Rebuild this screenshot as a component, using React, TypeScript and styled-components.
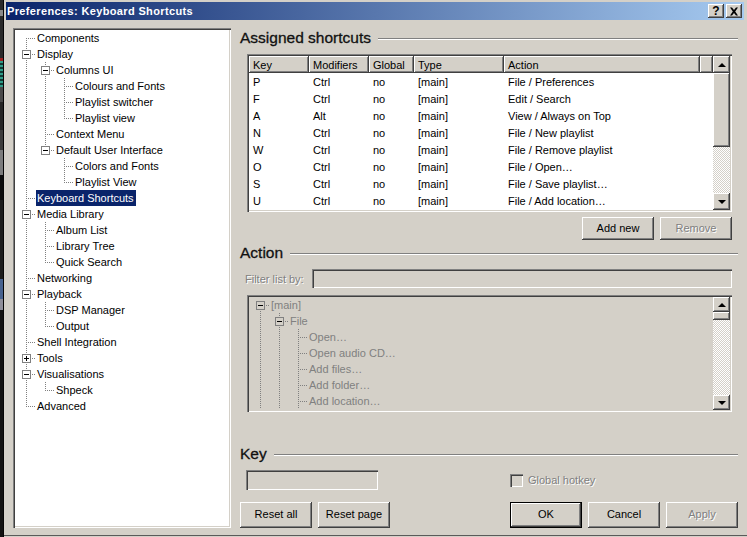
import React from "react";
import styled, { createGlobalStyle } from "styled-components";

const FACE = "#d4d0c8";
const UI_FONT = `"Liberation Sans", Arial, sans-serif`;

const Global = createGlobalStyle`
  html, body { margin: 0; padding: 0; overflow: hidden; background: #101010; }
  * { box-sizing: border-box; }
`;

const Desktop = styled.div`
  width: 747px;
  height: 537px;
  display: flex;
  background:
    repeating-linear-gradient(to bottom, #2f9c88 0 2px, #123a34 2px 4px) 0 61px / 3px 26px no-repeat,
    linear-gradient(to bottom,
      #2a2a2a 0 10px, #8a8a8a 10px 16px, #2a2a2a 16px 58px, #a02020 58px 61px, #2a2a2a 61px 87px,
      #4a4a4a 87px 102px, #262626 102px 130px, #3c3c3c 130px 150px, #7c7c7c 150px 175px,
      #0c0c0c 175px 200px, #1c1c1c 200px 279px, #47628f 279px 299px, #8e8e9a 299px 310px,
      #121212 310px 537px) 0 0 / 3px 537px no-repeat,
    #050505;
  font-family: ${UI_FONT};
  font-size: 11px;
  color: #000;
`;

const Win = styled.div`
  margin-left: 4px;
  flex: 1;
  display: flex;
  flex-direction: column;
  background: ${FACE};
  padding: 2px 3px 2px 2px;
  box-shadow: inset 0 -1px 0 ${FACE}, inset 0 -2px 0 #5a5a5a;
  min-width: 0;
`;

const TitleBar = styled.div`
  height: 18px;
  display: flex;
  align-items: center;
  padding: 0 2px 0 1px;
  background: linear-gradient(to right, #0a246a, #a6caf0);
  color: #fff;
  font-weight: 700;
  font-size: 11px;
  letter-spacing: 0.36px;
`;

const TitleText = styled.span`
  flex: 1;
`;

const raised = `
  background: ${FACE};
  box-shadow: inset -1px -1px 0 #404040, inset 1px 1px 0 #fff, inset -2px -2px 0 #808080;
`;

const sunken = `
  box-shadow: inset 1px 1px 0 #808080, inset 2px 2px 0 #404040, inset -1px -1px 0 #fff, inset -2px -2px 0 ${FACE};
`;

const CaptionButton = styled.div`
  ${raised}
  width: 16px;
  height: 14px;
  margin-left: 2px;
  display: flex;
  align-items: center;
  justify-content: center;
  color: #000;
  font-size: 12px;
  font-weight: 700;
  letter-spacing: 0;
`;

const Body = styled.div`
  flex: 1;
  display: flex;
  padding: 8px 6px 7px 7px;
  min-height: 0;
`;

const TreePanel = styled.div`
  ${sunken}
  width: 218px;
  background: #fff;
  padding: 2px 2px 2px 4px;
`;

const Right = styled.div`
  margin-left: 9px;
  width: 498px;
  display: flex;
  flex-direction: column;
`;

const Heading = styled.div<{ $top: number }>`
  margin-top: ${(p) => p.$top}px;
  height: 20px;
  padding-bottom: 1px;
  display: flex;
  align-items: center;
  gap: 7px;
  font-size: 15.5px;
  line-height: 18px;
  font-weight: 400;
  color: #111;
  -webkit-text-stroke: 0.3px #111;
`;

const Rule = styled.div`
  flex: 1;
  height: 2px;
  margin-top: 3px;
  background: linear-gradient(to bottom, #808080 0 1px, #fff 1px 2px);
`;

const ListBox = styled.div`
  ${sunken}
  margin: 6px 6px 0 7px;
  height: 158px;
  padding: 2px;
  display: flex;
  background: #fff;
`;

const ListMain = styled.div`
  flex: 1;
  min-width: 0;
  display: flex;
  flex-direction: column;
`;

const HeaderRow = styled.div`
  height: 17px;
  display: flex;
`;

const HeaderCell = styled.div<{ $w: number }>`
  ${raised}
  width: ${(p) => p.$w}px;
  flex: ${(p) => (p.$w ? "none" : 1)};
  padding: 0 4px;
  display: flex;
  align-items: center;
`;

const DataRow = styled.div`
  height: 17px;
  display: flex;
  align-items: center;
`;

const DataCell = styled.div<{ $w: number }>`
  width: ${(p) => p.$w}px;
  padding: 0 4px;
  white-space: nowrap;
`;

const Scroll = styled.div`
  width: 17px;
  display: flex;
  flex-direction: column;
  flex: none;
`;

const ScrollBtn = styled.div<{ $h: number }>`
  ${raised}
  height: ${(p) => p.$h}px;
  flex: none;
  display: flex;
  align-items: center;
  justify-content: center;
`;

const Arrow = styled.span<{ $up?: boolean }>`
  width: 0;
  height: 0;
  border-left: 4px solid transparent;
  border-right: 4px solid transparent;
  ${(p) => (p.$up ? "border-bottom: 4px solid #000;" : "border-top: 4px solid #000;")}
`;

const Thumb = styled.div<{ $h: number }>`
  ${raised}
  height: ${(p) => p.$h}px;
  flex: none;
`;

const Track = styled.div`
  flex: 1;
  background: repeating-conic-gradient(#fff 0 25%, ${FACE} 0 50%) 0 0 / 2px 2px;
`;

const ButtonRow = styled.div`
  margin: 5px 6px 0 0;
  display: flex;
  justify-content: flex-end;
  gap: 6px;
`;

const Btn = styled.div<{ $h?: number; $off?: boolean; $def?: boolean }>`
  ${raised}
  width: 72px;
  height: ${(p) => p.$h ?? 26}px;
  padding-bottom: 2px;
  display: flex;
  align-items: center;
  justify-content: center;
  font-size: 11px;
  ${(p) => (p.$off ? "color: #808080; text-shadow: 1px 1px 0 #fff;" : "")}
  ${(p) =>
    p.$def
      ? `box-shadow: inset 0 0 0 1px #000, inset -2px -2px 0 #404040, inset 2px 2px 0 #fff, inset -3px -3px 0 #808080;`
      : ""}
`;

const FilterRow = styled.div`
  margin: 6px 6px 0 5px;
  height: 19px;
  display: flex;
  align-items: center;
`;

const OffLabel = styled.span`
  color: #808080;
  text-shadow: 1px 1px 0 #fff;
`;

const FilterInput = styled.div`
  ${sunken}
  margin-left: auto;
  width: 420px;
  height: 100%;
`;

const ActionBox = styled.div`
  ${sunken}
  margin: 7px 6px 0 7px;
  height: 117px;
  padding: 2px;
  display: flex;
`;

const ActionTree = styled.div`
  flex: 1;
  min-width: 0;
  overflow: hidden;
  padding-left: 2px;
  color: #808080;
`;

const KeyRow = styled.div`
  margin-top: 6px;
  height: 20px;
  display: flex;
  align-items: center;
  justify-content: space-between;
`;

const KeyInput = styled.div`
  ${sunken}
  margin-left: 6px;
  width: 132px;
  height: 100%;
`;

const CheckLabel = styled.div`
  width: 228px;
  display: flex;
  align-items: center;
  gap: 5px;
`;

const CheckBox = styled.div`
  ${sunken}
  width: 13px;
  height: 13px;
`;

const Footer = styled.div`
  margin-top: 12px;
  display: flex;
  justify-content: space-between;
`;

const Group = styled.div`
  display: flex;
  gap: 6px;
`;

/* Tree */
const TreeRow = styled.div`
  height: 16px;
  display: flex;
  align-items: center;
  flex: none;
`;

const Guide = styled.div<{ $v?: "full" | "tee" | "end" | "start" | "none"; $h?: boolean }>`
  position: relative;
  width: 19px;
  height: 16px;
  flex: none;
  &::before {
    content: "";
    display: ${(p) => (!p.$v || p.$v === "none" ? "none" : "block")};
    position: absolute;
    left: 9px;
    width: 1px;
    top: ${(p) => (p.$v === "start" ? "8px" : "0")};
    height: ${(p) => (p.$v === "end" ? "9px" : p.$v === "start" ? "8px" : "16px")};
    background: repeating-linear-gradient(to bottom, #808080 0 1px, transparent 1px 2px);
  }
  &::after {
    content: "";
    display: ${(p) => (p.$h ? "block" : "none")};
    position: absolute;
    left: 10px;
    top: 8px;
    width: 9px;
    height: 1px;
    background: repeating-linear-gradient(to right, transparent 0 1px, #808080 1px 2px);
  }
`;

const Expander = styled.span`
  position: absolute;
  z-index: 1;
  left: 5px;
  top: 4px;
  width: 9px;
  height: 9px;
  background: #fff;
  border: 1px solid #808080;
  color: #000;
`;

const ExpanderOff = styled(Expander)`
  background: ${FACE};
`;

const Minus = styled.span`
  position: absolute;
  left: 1px;
  top: 3px;
  width: 5px;
  height: 1px;
  background: currentColor;
`;

const PlusBar = styled.span`
  position: absolute;
  left: 3px;
  top: 1px;
  width: 1px;
  height: 5px;
  background: currentColor;
`;

const Label = styled.span<{ $sel?: boolean }>`
  margin-left: ${(p) => (p.$sel ? "0" : "1px")};
  padding: ${(p) => (p.$sel ? "0 2px 0 1px" : "0")};
  height: 16px;
  line-height: 16px;
  white-space: nowrap;
  ${(p) => (p.$sel ? "background: #0a246a; color: #fff;" : "")}
`;

type NodeRow = {
  label: string;
  guides: ("full" | "none")[];
  v: "tee" | "end" | "start" | "full";
  exp?: "-" | "+";
  sel?: boolean;
};

const R = (label: string, guides: string, v: NodeRow["v"], exp?: "-" | "+", sel?: boolean): NodeRow => ({
  label,
  guides: guides.split("").map((c) => (c === "1" ? "full" : "none")),
  v,
  exp,
  sel,
});

const treeRows: NodeRow[] = [
  R("Components", "", "start"),
  R("Display", "", "tee", "-"),
  R("Columns UI", "1", "tee", "-"),
  R("Colours and Fonts", "11", "tee"),
  R("Playlist switcher", "11", "tee"),
  R("Playlist view", "11", "end"),
  R("Context Menu", "1", "tee"),
  R("Default User Interface", "1", "end", "-"),
  R("Colors and Fonts", "10", "tee"),
  R("Playlist View", "10", "end"),
  R("Keyboard Shortcuts", "", "tee", undefined, true),
  R("Media Library", "", "tee", "-"),
  R("Album List", "1", "tee"),
  R("Library Tree", "1", "tee"),
  R("Quick Search", "1", "end"),
  R("Networking", "", "tee"),
  R("Playback", "", "tee", "-"),
  R("DSP Manager", "1", "tee"),
  R("Output", "1", "end"),
  R("Shell Integration", "", "tee"),
  R("Tools", "", "tee", "+"),
  R("Visualisations", "", "tee", "-"),
  R("Shpeck", "1", "end"),
  R("Advanced", "", "end"),
];

const actionRows: NodeRow[] = [
  R("[main]", "", "start", "-"),
  R("File", "1", "tee", "-"),
  R("Open…", "11", "tee"),
  R("Open audio CD…", "11", "tee"),
  R("Add files…", "11", "tee"),
  R("Add folder…", "11", "tee"),
  R("Add location…", "11", "tee"),
];

function Tree({ rows, off }: { rows: NodeRow[]; off?: boolean }) {
  const Box = off ? ExpanderOff : Expander;
  return (
    <>
      {rows.map((r, i) => (
        <TreeRow key={i}>
          {r.guides.map((g, j) => (
            <Guide key={j} $v={g} />
          ))}
          <Guide $v={r.v} $h>
            {r.exp && (
              <Box>
                <Minus />
                {r.exp === "+" && <PlusBar />}
              </Box>
            )}
          </Guide>
          <Label $sel={r.sel}>{r.label}</Label>
        </TreeRow>
      ))}
    </>
  );
}

const cols = [
  { t: "Key", w: 60 },
  { t: "Modifiers", w: 60 },
  { t: "Global", w: 45 },
  { t: "Type", w: 90 },
  { t: "Action", w: 196 },
];

const data = [
  ["P", "Ctrl", "no", "[main]", "File / Preferences"],
  ["F", "Ctrl", "no", "[main]", "Edit / Search"],
  ["A", "Alt", "no", "[main]", "View / Always on Top"],
  ["N", "Ctrl", "no", "[main]", "File / New playlist"],
  ["W", "Ctrl", "no", "[main]", "File / Remove playlist"],
  ["O", "Ctrl", "no", "[main]", "File / Open…"],
  ["S", "Ctrl", "no", "[main]", "File / Save playlist…"],
  ["U", "Ctrl", "no", "[main]", "File / Add location…"],
];

export default function App() {
  return (
    <Desktop>
      <Global />
      <Win>
        <TitleBar>
          <TitleText>Preferences: Keyboard Shortcuts</TitleText>
          <CaptionButton>?</CaptionButton>
          <CaptionButton>
            <svg width="10" height="9" viewBox="0 0 10 9" aria-hidden="true">
              <path d="M1 0.5h2l2 2.6 2-2.6h2L6.2 4.5 9 8.5H7L5 5.9 3 8.5H1l2.8-4z" fill="#000" />
            </svg>
          </CaptionButton>
        </TitleBar>
        <Body>
          <TreePanel>
            <Tree rows={treeRows} />
          </TreePanel>
          <Right>
            <Heading $top={0}>
              Assigned shortcuts
              <Rule />
            </Heading>
            <ListBox>
              <ListMain>
                <HeaderRow>
                  {cols.map((c) => (
                    <HeaderCell key={c.t} $w={c.w}>
                      {c.t}
                    </HeaderCell>
                  ))}
                  <HeaderCell $w={0} />
                </HeaderRow>
                {data.map((row) => (
                  <DataRow key={row[0]}>
                    {row.map((v, i) => (
                      <DataCell key={i} $w={cols[i].w}>
                        {v}
                      </DataCell>
                    ))}
                  </DataRow>
                ))}
              </ListMain>
              <Scroll>
                <ScrollBtn $h={17}>
                  <Arrow $up />
                </ScrollBtn>
                <Thumb $h={74} />
                <Track />
                <ScrollBtn $h={17}>
                  <Arrow />
                </ScrollBtn>
              </Scroll>
            </ListBox>
            <ButtonRow>
              <Btn $h={23}>Add new</Btn>
              <Btn $h={23} $off>
                Remove
              </Btn>
            </ButtonRow>
            <Heading $top={3}>
              Action
              <Rule />
            </Heading>
            <FilterRow>
              <OffLabel>Filter list by:</OffLabel>
              <FilterInput />
            </FilterRow>
            <ActionBox>
              <ActionTree>
                <Tree rows={actionRows} off />
              </ActionTree>
              <Scroll>
                <ScrollBtn $h={15}>
                  <Arrow $up />
                </ScrollBtn>
                <Thumb $h={8} />
                <Track />
                <ScrollBtn $h={15}>
                  <Arrow />
                </ScrollBtn>
              </Scroll>
            </ActionBox>
            <Heading $top={32}>
              Key
              <Rule />
            </Heading>
            <KeyRow>
              <KeyInput />
              <CheckLabel>
                <CheckBox />
                <OffLabel>Global hotkey</OffLabel>
              </CheckLabel>
            </KeyRow>
            <Footer>
              <Group>
                <Btn>Reset all</Btn>
                <Btn>Reset page</Btn>
              </Group>
              <Group>
                <Btn $def>OK</Btn>
                <Btn>Cancel</Btn>
                <Btn $off>Apply</Btn>
              </Group>
            </Footer>
          </Right>
        </Body>
      </Win>
    </Desktop>
  );
}
